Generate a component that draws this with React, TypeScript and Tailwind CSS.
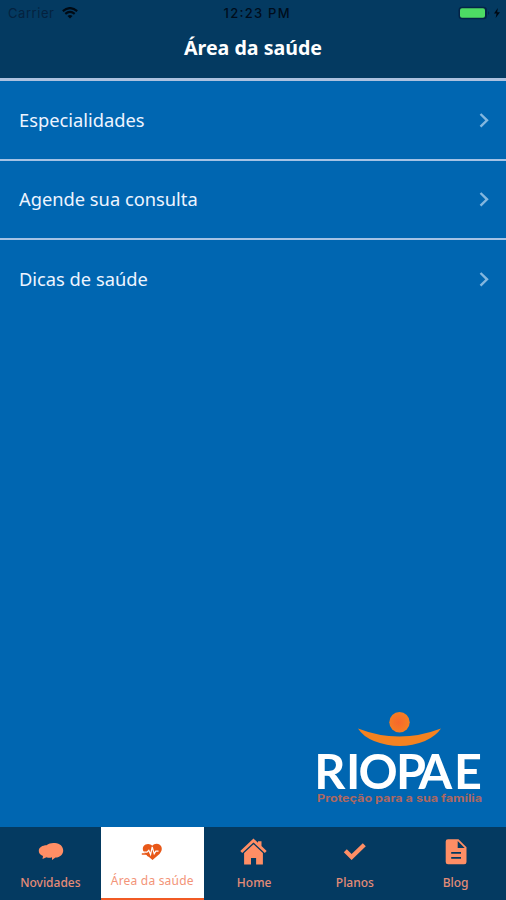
import type { ReactNode } from "react";

const items = ["Especialidades", "Agende sua consulta", "Dicas de saúde"];

function StatusBar() {
  return (
    <div className="flex h-[26px] items-center pl-2 pr-1 font-['Inter','Liberation_Sans',sans-serif] text-[13px] text-[#02101f]">
      <div className="flex flex-1 items-center gap-[6px]">
        <svg width="48" height="16" className="overflow-visible">
          <text x="0" y="12.5" textLength="46" fill="#04223f">Carrier</text>
        </svg>
        <svg width="16" height="12" viewBox="0 0 16 12" fill="none" stroke="#000a14" strokeWidth="2.1">
          <path d="M0.8 4.1 Q8 -2 15.2 4.1" />
          <path d="M3.3 6.9 Q8 2.8 12.7 6.9" />
          <path d="M8 11.6 L5.5 9 Q8 6.9 10.5 9 Z" fill="#000a14" stroke="none" />
        </svg>
      </div>
      <svg width="68" height="16" className="overflow-visible">
        <text x="2.5" y="12.5" textLength="66" fontWeight="500" fill="#000d1c">12:23 PM</text>
      </svg>
      <div className="flex flex-1 justify-end">
        <svg width="44" height="14" viewBox="0 0 44 14">
          <rect x="0.5" y="0.7" width="28.5" height="12.6" rx="3.5" fill="#042347" />
          <rect x="2" y="2.2" width="25" height="9.6" rx="2" fill="#4ddb64" />
          <path d="M30.2 5 Q32.3 7 30.2 9" fill="#042347" />
          <path d="M39.8 2 L36 7.5 H38.6 L37.6 12 L42 6.3 H39.2 Z" fill="#000812" />
        </svg>
      </div>
    </div>
  );
}

function Logo() {
  return (
    <svg width="170" height="96" viewBox="0 0 170 96" role="img" aria-label="RIOPAE" className="overflow-visible">
      <defs>
        <radialGradient id="head" cx="45%" cy="50%" r="60%">
          <stop offset="0" stopColor="#f7672c" />
          <stop offset="1" stopColor="#f58220" />
        </radialGradient>
      </defs>
      <circle cx="84.5" cy="12.3" r="10.2" fill="url(#head)" />
      <path d="M43 18.5 Q84 34.5 126 18.5 Q121 26 110 31 Q85 41 59 31 Q48 26.5 43 18.5 Z" fill="#f58220" />
      <text x="-0.7 31 43.5 81 103.5 139" y="79" fontSize="48.5" fontWeight="700" fill="#fff" className="font-['Lato',sans-serif]">RIOPAE</text>
      <text x="2" y="91.5" textLength="165" lengthAdjust="spacingAndGlyphs" fontSize="10.5" fontWeight="700" fill="#ad6862" className="font-['Inter',sans-serif]">Proteção para a sua família</text>
    </svg>
  );
}

function Tab({ label, active = false, children }: { label: string; active?: boolean; children: ReactNode }) {
  return (
    <button
      className={
        active
          ? "flex w-[103px] shrink-0 flex-col items-center border-b-2 border-[#f15a24] bg-white pt-[10px] text-[#f39478]"
          : "flex min-w-0 flex-1 flex-col items-center pt-[10px] text-[#e58c77]"
      }
    >
      <svg width="32" height="32" viewBox="0 0 32 32" fill="#ff8e65">{children}</svg>
      <span className={active ? "mt-[3px] whitespace-nowrap text-[12px] leading-[18px] tracking-[0.2px]" : "mt-[5px] text-[12px] font-medium leading-[18px]"}>{label}</span>
    </button>
  );
}

export default function App() {
  return (
    <div className="flex h-[900px] w-[506px] flex-col overflow-hidden bg-[#0066b1] font-['Noto_Sans',sans-serif]">
      <header className="h-[81px] shrink-0 border-b-[3px] border-[#adc1df] bg-[#043a61]">
        <StatusBar />
        <h1 className="text-center text-[19.6px] font-bold leading-[44px] text-white">Área da saúde</h1>
      </header>
      <nav className="shrink-0">
        {items.map((item, i) => (
          <a key={item} className={i < 2 ? "flex h-[79.5px] items-center justify-between border-b-2 border-[#a4c2e5] pl-[19px] pr-[16px]" : "flex h-[78px] items-center justify-between pl-[19px] pr-[16px]"}>
            <span className="leading-[28px] text-[18.3px] text-[#edf4ff]">{item}</span>
            <svg width="12" height="18" viewBox="0 0 12 18" fill="none" stroke="#83b7df" strokeWidth="2.4">
              <path d="M2.5 3 L9 9.3 L2.5 15.6" />
            </svg>
          </a>
        ))}
      </nav>
      <main className="flex flex-1 items-end justify-end pb-[21px] pr-[21px]">
        <Logo />
      </main>
      <footer className="flex h-[73px] shrink-0 bg-[#043a61]">
        <Tab label="Novidades">
          <path d="M12.5 8.3 C15 6.2 18 5.6 21 6 C26 6.3 29.2 9.5 29.2 13.5 C29.2 17.5 26 20.5 21.5 20.6 L18 23 V20.2 C16.5 20.9 14.5 21 12.5 20.2 L8.5 22 L9 19 C6 18 4.6 16 4.8 13.5 C5 10.5 8.5 8.3 12.5 8.3 Z" />
        </Tab>
        <Tab label="Área da saúde" active>
          <path d="M16.2 8.8 C18 6.5 21.5 6 23.8 7.8 C26.8 10.4 26.2 14 23.5 17 L16.5 23 L8.6 16.2 C5.8 12.6 6.5 9 9.5 7.5 C12 6.3 14.8 7 16.2 8.8 Z" fill="#e85818" />
          <path d="M5.5 15.2 H11 L12.8 13.3 L14.6 17.5 L16.2 9.8 L18.2 16.8 L19.8 14.2 H22.5" fill="none" stroke="#fff" strokeWidth="1.2" />
          <path d="M5.8 17.1 H10.8 L12.6 19.2" fill="none" stroke="#e85818" strokeWidth="1.5" />
        </Tab>
        <Tab label="Home">
          <path d="M15.5 1.5 L20 5.8 V4.3 H23.5 V9.1 L28.7 14 L26.8 16 L15.5 5.5 L4.2 16 L2.3 14 Z" />
          <path d="M15.5 7.3 L24.9 16 V27.5 H18.1 V21 H13 V27.5 H6.1 V16 Z" />
        </Tab>
        <Tab label="Planos">
          <path d="M4.8 15.2 L7.8 12.2 L12.6 17 L23.8 6.2 L26.8 9.2 L12.6 23.1 Z" />
        </Tab>
        <Tab label="Blog">
          <path fillRule="evenodd" d="M8 2.2 H18.5 L26.5 10.2 V25 Q26.5 27.3 24.2 27.3 H8 Q5.7 27.3 5.7 25 V4.5 Q5.7 2.2 8 2.2 Z M17.7 4 V11 H24.7 Z M11.2 15 V16.8 H21 V15 Z M11.2 20 V21.8 H21 V20 Z" />
        </Tab>
      </footer>
    </div>
  );
}
